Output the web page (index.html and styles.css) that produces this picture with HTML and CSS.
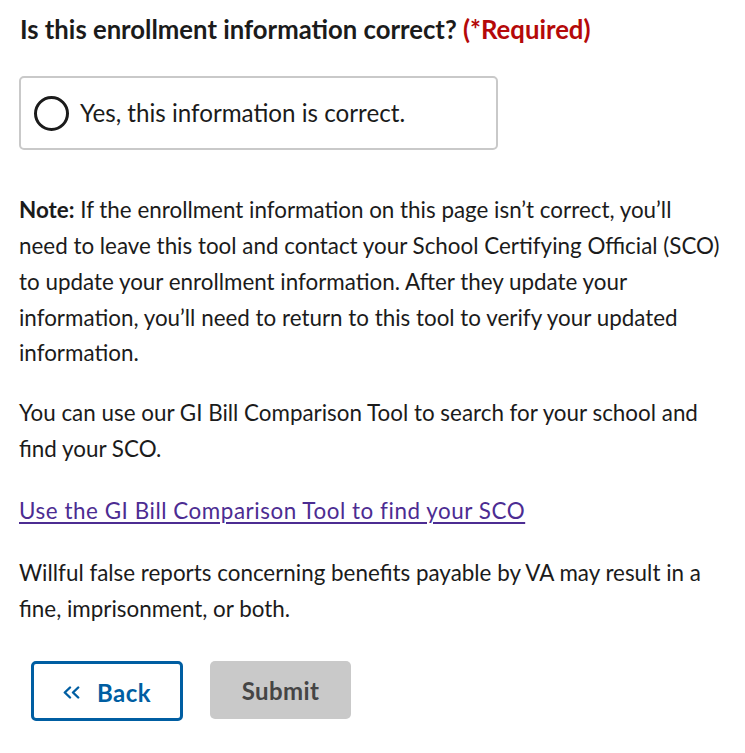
FILE: index.html
```html
<!DOCTYPE html>
<html lang="en">
<head>
<meta charset="utf-8">
<title>Verify enrollment</title>
<link rel="stylesheet" href="styles.css">
</head>
<body>
<main class="page">
  <fieldset class="question">
    <legend class="question-title">Is this enrollment information correct? <span class="required">(*Required)</span></legend>
    <label class="radio-card">
      <span class="radio-circle"></span>
      <span class="radio-label">Yes, this information is correct.</span>
    </label>
  </fieldset>

  <div class="notes">
    <p class="text first"><strong>Note:</strong> If the enrollment information on this page isn’t correct, you’ll need to leave this tool and contact your School Certifying Official (SCO) to update your enrollment information. After they update your information, you’ll need to return to this tool to verify your updated information.</p>
    <p class="text gap">You can use our GI Bill Comparison Tool to search for your school and find your SCO.</p>
    <p class="text gap-lg"><a class="link" href="#">Use the GI Bill Comparison Tool to find your SCO</a></p>
    <p class="text gap-lg">Willful false reports concerning benefits payable by VA may result in a fine, imprisonment, or both.</p>
  </div>

  <div class="actions">
    <button class="btn btn-back" type="button">
      <svg class="chev" width="17" height="13" viewBox="0 0 17 13" aria-hidden="true"><path d="M7 1.5 L1.8 6.5 L7 11.5 M15.2 1.5 L10 6.5 L15.2 11.5" fill="none" stroke="#005ea2" stroke-width="2.4" stroke-linecap="round" stroke-linejoin="round"/></svg>
      <span>Back</span>
    </button>
    <button class="btn btn-submit" type="button" disabled>Submit</button>
  </div>
</main>
</body>
</html>
```
FILE: styles.css
```css
html, body {
  margin: 0;
  padding: 0;
  background: #ffffff;
}
body {
  font-family: Lato, "Liberation Sans", sans-serif;
  color: #1b1b1b;
}
.page {
  padding: 13px 15px 0 19px;
}
.question {
  border: 0;
  margin: 0;
  padding: 0;
  min-width: 0;
}
.question-title {
  padding: 0;
  margin: 0 0 0 1px;
  font-size: 25.7px;
  line-height: 33px;
  font-weight: 700;
  color: #1b1b1b;
}
.required {
  color: #b50909;
}
.radio-card {
  margin-top: 30px;
  width: 479px;
  height: 74px;
  box-sizing: border-box;
  border: 2px solid #c9c9c9;
  border-radius: 5px;
  display: flex;
  align-items: center;
  padding: 0 13px;
  gap: 11px;
}
.radio-circle {
  width: 35px;
  height: 35px;
  box-sizing: border-box;
  border: 3px solid #1b1b1b;
  border-radius: 50%;
  flex: none;
}
.radio-label {
  font-size: 24.2px;
  line-height: 30px;
}
.notes {
  width: 705px;
}
.text {
  font-size: 22.4px;
  line-height: 35.84px;
  margin: 0;
}
.text strong {
  font-weight: 700;
}
.first {
  margin-top: 42px;
}
.gap {
  margin-top: 24px;
}
.gap-lg {
  margin-top: 26px;
}
.link {
  color: #4c2c92;
  letter-spacing: 0.55px;
  text-decoration: underline;
  text-decoration-thickness: 1.5px;
  text-underline-offset: 3px;
}
.actions {
  display: flex;
  align-items: flex-start;
  margin-top: 35px;
  padding-left: 12px;
  gap: 27px;
}
.btn {
  font-family: Lato, "Liberation Sans", sans-serif;
  font-weight: 700;
  font-size: 24px;
  letter-spacing: 0.4px;
  border-radius: 5px;
  box-sizing: border-box;
  display: flex;
  align-items: center;
  justify-content: center;
  margin: 0;
}
.btn-back {
  width: 152px;
  height: 60px;
  background: #ffffff;
  border: 3px solid #005ea2;
  color: #005ea2;
  gap: 17px;
  padding: 2px 0 0 0;
}
.chev {
  display: block;
  flex: none;
}
.btn-submit {
  width: 141px;
  height: 58px;
  background: #c9c9c9;
  border: 0;
  color: #454545;
  padding: 0;
}
```
